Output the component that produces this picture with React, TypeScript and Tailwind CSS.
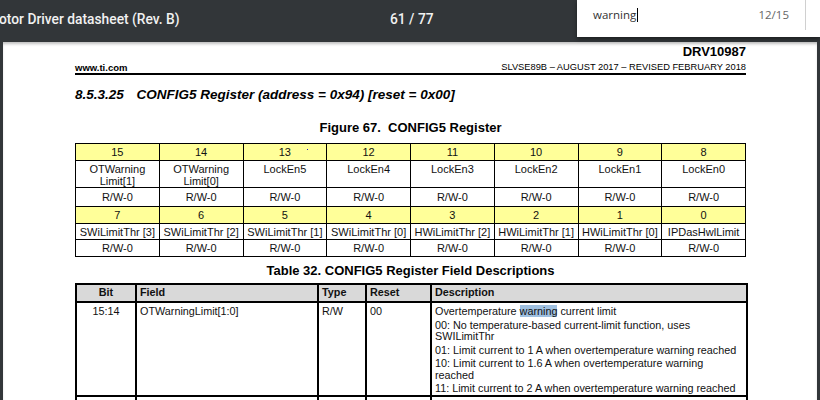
import React from "react";

const bits1 = ["15", "14", "13", "12", "11", "10", "9", "8"];
const names1: string[][] = [
  ["OTWarning", "Limit[1]"],
  ["OTWarning", "Limit[0]"],
  ["LockEn5"],
  ["LockEn4"],
  ["LockEn3"],
  ["LockEn2"],
  ["LockEn1"],
  ["LockEn0"],
];
const bits2 = ["7", "6", "5", "4", "3", "2", "1", "0"];
const names2 = [
  "SWiLimitThr [3]",
  "SWiLimitThr [2]",
  "SWiLimitThr [1]",
  "SWiLimitThr [0]",
  "HWiLimitThr [2]",
  "HWiLimitThr [1]",
  "HWiLimitThr [0]",
  "IPDasHwlLimit",
];

const cell = "border border-black text-center p-0 align-middle";

function RegisterTable() {
  return (
    <table className="mt-[8px] w-[671px] table-fixed border-collapse text-[11px] leading-[12px] text-[#111]">
      <tbody>
        <tr className="h-[17px] bg-[#ffff99]">
          {bits1.map((b, i) => (
            <td key={b} className={cell + " relative"}>
              {b}
              {i === 2 && <span className="absolute left-[63px] top-[5px] h-[1px] w-[1px] bg-[#2222cc]" />}
            </td>
          ))}
        </tr>
        <tr className="h-[27px]">
          {names1.map((n, i) => (
            <td key={i} className={cell + " align-top pt-[2px]"}>
              {n.map((l) => (
                <div key={l}>{l}</div>
              ))}
            </td>
          ))}
        </tr>
        <tr className="h-[19px]">
          {bits1.map((b) => (
            <td key={b} className={cell}>R/W-0</td>
          ))}
        </tr>
        <tr className="h-[17px] bg-[#ffff99]">
          {bits2.map((b) => (
            <td key={b} className={cell}>{b}</td>
          ))}
        </tr>
        <tr className="h-[16px]">
          {names2.map((n) => (
            <td key={n} className={cell}>{n}</td>
          ))}
        </tr>
        <tr className="h-[17px]">
          {bits2.map((b) => (
            <td key={b} className={cell}>R/W-0</td>
          ))}
        </tr>
      </tbody>
    </table>
  );
}

function FieldTable() {
  return (
    <table className="mt-[5px] w-[671px] table-fixed border-collapse text-[10.8px] leading-[11.5px] text-[#111]">
      <colgroup>
        <col className="w-[60px]" />
        <col className="w-[182px]" />
        <col className="w-[48px]" />
        <col className="w-[65px]" />
        <col className="w-[316px]" />
      </colgroup>
      <tbody>
        <tr className="h-[18px] bg-[#d9d9d9] font-bold">
          <td className="border-2 border-black text-center">Bit</td>
          <td className="border-2 border-black pl-[3px]">Field</td>
          <td className="border-2 border-black pl-[3px]">Type</td>
          <td className="border-2 border-black pl-[3px]">Reset</td>
          <td className="border-2 border-black pl-[3px]">Description</td>
        </tr>
        <tr className="h-[93px] align-top">
          <td className="border-x-2 border-black pt-[3px] text-center">15:14</td>
          <td className="border-x-2 border-black pl-[3px] pt-[3px]">OTWarningLimit[1:0]</td>
          <td className="border-x-2 border-black pl-[3px] pt-[3px]">R/W</td>
          <td className="border-x-2 border-black pl-[3px] pt-[3px]">00</td>
          <td className="border-x-2 border-black pl-[3px] pr-[8px] pt-[3px]">
            <p className="mb-[2px]">
              Overtemperature <span className="bg-[#9fc0e0]">warning</span> current limit
            </p>
            <p className="mb-[2px]">00: No temperature-based current-limit function, uses SWILimitThr</p>
            <p className="mb-[2px]">01: Limit current to 1 A when overtemperature warning reached</p>
            <p className="mb-[2px]">10: Limit current to 1.6 A when overtemperature warning reached</p>
            <p>11: Limit current to 2 A when overtemperature warning reached</p>
          </td>
        </tr>
        <tr className="h-[10px]">
          <td className="border-x-2 border-t-2 border-black" />
          <td className="border-x-2 border-t-2 border-black" />
          <td className="border-x-2 border-t-2 border-black" />
          <td className="border-x-2 border-t-2 border-black" />
          <td className="border-x-2 border-t-2 border-black" />
        </tr>
      </tbody>
    </table>
  );
}

export default function App() {
  return (
    <div className="relative flex h-[400px] w-[820px] flex-col overflow-hidden bg-[#323639]">
      {/* toolbar */}
      <div className="flex h-[42px] shrink-0 items-start pt-[10px] font-['Roboto',sans-serif] text-[13.8px] font-medium text-[#f1f1f1]">
        <span className="ml-[-1px] w-[391px] leading-[18px]">otor Driver datasheet (Rev. B)</span>
        <span className="leading-[18px]">61 / 77</span>
      </div>

      {/* find bar */}
      <div className="absolute right-0 top-0 flex h-[37px] w-[243px] items-start bg-white pt-[6px] shadow-[0_2px_4px_rgba(0,0,0,0.45)] font-['Open_Sans',sans-serif] text-[11.5px] leading-[18px]">
        <span className="ml-[16px] text-[#333]">warning</span>
        <span className="ml-[1px] mt-[2px] h-[14px] w-[1px] bg-black" />
        <span className="ml-auto text-[#666]">12/15</span>
        <span className="ml-[16px] mr-[14px] mt-[-6px] h-[30px] w-[1px] bg-[#d0d0d0]" />
      </div>

      {/* page */}
      <div className="ml-[3px] w-[814px] flex-1 bg-white shadow-[inset_0_3px_3px_-1px_rgba(0,0,0,0.25)] font-['Liberation_Sans',Arial,sans-serif] text-black">
        <div className="ml-[72px] flex w-[671px] flex-col">
          <div className="mt-[2px] text-right text-[13px] font-bold leading-[15px]">DRV10987</div>
          <div className="mt-[3px] flex h-[13px] items-start justify-between border-b-2 border-black leading-[11px]">
            <span className="text-[9.5px] font-bold">www.ti.com</span>
            <span className="text-[9.3px]">SLVSE89B – AUGUST 2017 – REVISED FEBRUARY 2018</span>
          </div>
          <div className="mt-[12px] text-[13.5px] font-bold italic leading-[16px]">
            8.5.3.25<span className="inline-block w-[9px]" /> CONFIG5 Register (address = 0x94) [reset = 0x00]
          </div>
          <div className="mt-[17px] text-center text-[13px] font-bold leading-[15px]">
            Figure 67.&nbsp; CONFIG5 Register
          </div>
          <RegisterTable />
          <div className="mt-[6px] text-center text-[13px] font-bold leading-[15px]">
            Table 32. CONFIG5 Register Field Descriptions
          </div>
          <FieldTable />
        </div>
      </div>
    </div>
  );
}
